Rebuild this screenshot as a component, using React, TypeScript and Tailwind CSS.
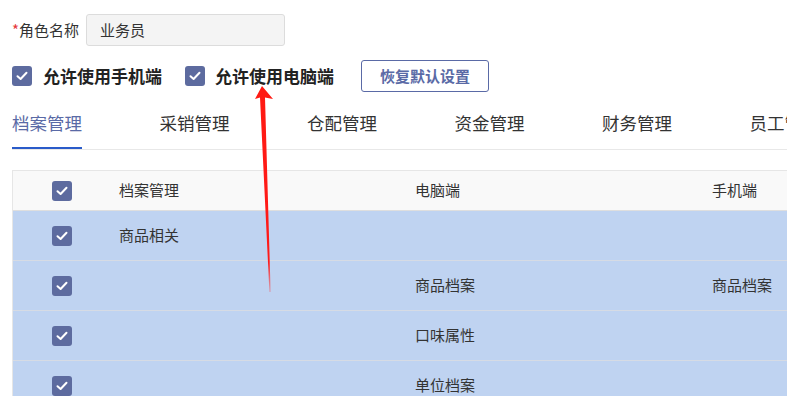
import React from "react";

const font = { fontFamily: '"Noto Sans CJK SC", "Noto Sans", sans-serif' };

const tabs = ["档案管理", "采销管理", "仓配管理", "资金管理", "财务管理", "员工管理"];

const rows = [
  { name: "商品相关", pc: "", mobile: "" },
  { name: "", pc: "商品档案", mobile: "商品档案" },
  { name: "", pc: "口味属性", mobile: "" },
  { name: "", pc: "单位档案", mobile: "" },
];

function Check() {
  return (
    <span className="flex h-5 w-5 shrink-0 items-center justify-center rounded-[3px] bg-[#5d6b9f]">
      <svg width="12" height="10" viewBox="0 0 12 10" fill="none">
        <path d="M1.5 5.2 4.6 8 10.5 1.8" stroke="#fff" strokeWidth="2" strokeLinecap="round" strokeLinejoin="round" />
      </svg>
    </span>
  );
}

export default function App() {
  return (
    <div className="relative h-[396px] w-[787px] overflow-hidden bg-white text-[#333]" style={font}>
      <div className="pl-3 pt-[14px]">
        <div className="flex h-8 items-center">
          <span className="text-[15px] text-[#333]">
            <span className="text-[#e5373a]">*</span>角色名称
          </span>
          <div className="ml-[7px] flex h-8 w-[199px] items-center rounded-[3px] border border-[#dcdcdc] bg-[#f4f4f4] pl-[13px] text-[15px] text-[#333]">
            业务员
          </div>
        </div>

        <div className="mt-[14px] flex h-8 items-center">
          <Check />
          <span className="ml-[11px] text-[17px] font-bold text-[#222]">允许使用手机端</span>
          <span className="ml-[23px]">
            <Check />
          </span>
          <span className="ml-[10px] text-[17px] font-bold text-[#222]">允许使用电脑端</span>
          <button className="ml-[27px] flex h-8 w-32 items-center justify-center rounded-[3px] border border-[#5a6aa6] bg-white text-[15px] font-bold text-[#5a6aa6]">
            恢复默认设置
          </button>
        </div>

        <div className="mt-[8px] flex items-end gap-[77.5px] whitespace-nowrap border-b border-[#e8e8e8]">
          {tabs.map((t, i) => (
            <div
              key={t}
              className={
                i === 0
                  ? "flex h-[49px] items-center border-b-2 border-[#2a5bc9] text-[17.5px] text-[#5a6aa6]"
                  : "flex h-[49px] items-center border-b-2 border-transparent text-[17.5px] text-[#333]"
              }
            >
              {t}
            </div>
          ))}
        </div>

        <div className="mt-5 border-l border-t border-[#e6e6e6] text-[15px]">
          <div className="flex h-10 items-center border-b border-[#dedede] bg-[#f9f9f9]">
            <div className="w-[106px] pl-[39px]">
              <Check />
            </div>
            <div className="w-[296px]">档案管理</div>
            <div className="w-[297px]">电脑端</div>
            <div className="whitespace-nowrap">手机端</div>
          </div>
          {rows.map((r, i) => (
            <div key={i} className="flex h-[50px] items-center border-b border-[#d6dbe4] bg-[#bfd3f1]">
              <div className="w-[106px] pl-[39px]">
                <Check />
              </div>
              <div className="w-[296px]">{r.name}</div>
              <div className="w-[297px]">{r.pc}</div>
              <div className="whitespace-nowrap">{r.mobile}</div>
            </div>
          ))}
        </div>
      </div>

      <svg className="pointer-events-none absolute left-0 top-0" width="787" height="396" viewBox="0 0 787 396">
        <defs>
          <linearGradient id="shaft" x1="0" y1="1" x2="0" y2="0">
            <stop offset="0" stopColor="#ff2a2a" stopOpacity="0.3" />
            <stop offset="0.15" stopColor="#ff1a1a" />
            <stop offset="1" stopColor="#ff1a12" />
          </linearGradient>
        </defs>
        <polygon
          points="262,86 255,99 260,97.5 269.4,292 270.6,292 265,97.5 273,99"
          fill="url(#shaft)"
        />
      </svg>
    </div>
  );
}
